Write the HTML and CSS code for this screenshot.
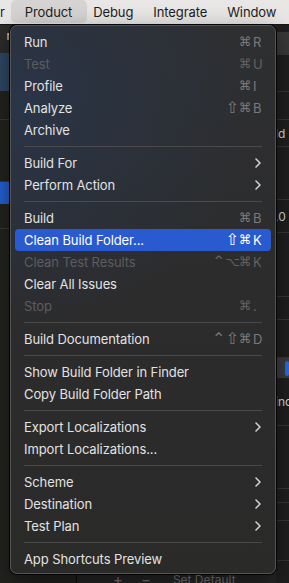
FILE: index.html
```html
<!DOCTYPE html>
<html lang="en">
<head>
    <meta charset="UTF-8">
    <title>Product menu</title>
    <link rel="stylesheet" href="styles.css">
</head>
<body>
    <div class="menubar">
        <span class="mb-item mb-cut">r</span>
        <span class="mb-item active">Product</span>
        <span class="mb-item">Debug</span>
        <span class="mb-item">Integrate</span>
        <span class="mb-item">Window</span>
    </div>

    <!-- window content behind the menu -->
    <div class="window">
        <div class="sidebar">
            <div class="sb-row sb-top"><span>n-</span></div>
            <div class="sb-row sb-sel"></div>
            <div class="sb-row sb-s"><span>s</span></div>
            <div class="sb-row sb-gap"></div>
            <div class="sb-row sb-active"><span>io</span></div>
            <div class="sb-row sb-gap2"></div>
            <div class="sb-row sb-io"><span>io</span></div>
        </div>
        <div class="editor">
            <div class="editor-body"></div>
            <div class="editor-bar">
                <span class="bar-btn">+</span>
                <span class="bar-btn">−</span>
                <span class="bar-label">Set Default</span>
            </div>
        </div>
        <div class="inspector">
            <div class="in-row in-tab"></div>
            <div class="in-row h37"></div>
            <div class="in-row h28"></div>
            <div class="in-row h27"><span>ld :</span></div>
            <div class="in-row h53"></div>
            <div class="in-row h33"><span>.0</span></div>
            <div class="in-row h64"></div>
            <div class="in-row h23"></div>
            <div class="in-row h38"></div>
            <div class="in-row in-bar"><i class="in-toggle"></i></div>
            <div class="in-row h48"><span>inc</span></div>
            <div class="in-row h63"></div>
            <div class="in-row h14"></div>
            <div class="in-row h18"></div>
            <div class="in-row h40"></div>
        </div>
    </div>

    <!-- Product menu -->
    <div class="menu">
        <div class="item"><span class="label">Run</span><span class="keys"><span class="mod">⌘</span><span class="key">R</span></span></div>
        <div class="item disabled"><span class="label">Test</span><span class="keys"><span class="mod">⌘</span><span class="key">U</span></span></div>
        <div class="item"><span class="label">Profile</span><span class="keys"><span class="mod">⌘</span><span class="key">I</span></span></div>
        <div class="item"><span class="label">Analyze</span><span class="keys"><span class="mod big">⇧</span><span class="mod">⌘</span><span class="key">B</span></span></div>
        <div class="item"><span class="label">Archive</span></div>
        <div class="sep"></div>
        <div class="item"><span class="label">Build For</span><svg class="chev" viewBox="0 0 6 10"><polyline points="1,1 5,5 1,9"/></svg></div>
        <div class="item"><span class="label">Perform Action</span><svg class="chev" viewBox="0 0 6 10"><polyline points="1,1 5,5 1,9"/></svg></div>
        <div class="sep"></div>
        <div class="item"><span class="label">Build</span><span class="keys"><span class="mod">⌘</span><span class="key">B</span></span></div>
        <div class="item selected"><span class="label">Clean Build Folder...</span><span class="keys"><span class="mod big">⇧</span><span class="mod">⌘</span><span class="key">K</span></span></div>
        <div class="item disabled"><span class="label">Clean Test Results</span><span class="keys"><span class="mod big">⌃</span><span class="mod">⌥</span><span class="mod">⌘</span><span class="key">K</span></span></div>
        <div class="item"><span class="label">Clear All Issues</span></div>
        <div class="item disabled"><span class="label">Stop</span><span class="keys"><span class="mod">⌘</span><span class="key">.</span></span></div>
        <div class="sep"></div>
        <div class="item"><span class="label">Build Documentation</span><span class="keys"><span class="mod big">⌃</span><span class="mod big">⇧</span><span class="mod">⌘</span><span class="key">D</span></span></div>
        <div class="sep"></div>
        <div class="item"><span class="label">Show Build Folder in Finder</span></div>
        <div class="item"><span class="label">Copy Build Folder Path</span></div>
        <div class="sep"></div>
        <div class="item"><span class="label">Export Localizations</span><svg class="chev" viewBox="0 0 6 10"><polyline points="1,1 5,5 1,9"/></svg></div>
        <div class="item"><span class="label">Import Localizations...</span></div>
        <div class="sep"></div>
        <div class="item"><span class="label">Scheme</span><svg class="chev" viewBox="0 0 6 10"><polyline points="1,1 5,5 1,9"/></svg></div>
        <div class="item"><span class="label">Destination</span><svg class="chev" viewBox="0 0 6 10"><polyline points="1,1 5,5 1,9"/></svg></div>
        <div class="item"><span class="label">Test Plan</span><svg class="chev" viewBox="0 0 6 10"><polyline points="1,1 5,5 1,9"/></svg></div>
        <div class="sep"></div>
        <div class="item"><span class="label">App Shortcuts Preview</span></div>
    </div>
</body>
</html>
```

FILE: styles.css
```css
* {
    box-sizing: border-box;
}
body {
    margin: 0;
    width: 289px;
    height: 583px;
    overflow: hidden;
    position: relative;
    background: #222220;
    font-family: Inter, 'Noto Sans', sans-serif;
}
/* top menu bar */
.menubar {
    height: 25px;
    padding-bottom: 1px;
    background: #e9e7e5;
    border-bottom: 1px solid #161616;
    display: flex;
    align-items: center;
    gap: 20px;
    font-size: 13px;
    letter-spacing: -0.1px;
    color: #1c1c1c;
}
.mb-item {
    white-space: nowrap;
}
.mb-cut {
    margin-left: 0;
}
.mb-item.active {
    align-self: stretch;
    display: flex;
    align-items: center;
    padding: 0 15px 0 14px;
    margin: 0 -14px 0 -14px;
    background: #d6d4d2;
    border-radius: 5px;
}
/* window behind */
.window {
    display: flex;
    height: 558px;
    overflow: hidden;
    font-size: 12px;
    color: #dcdcdc;
}
.sidebar {
    width: 77px;
    background: #232320;
    border-right: 1px solid #0c0c0c;
    display: flex;
    flex-direction: column;
}
.sb-row {
    display: flex;
    align-items: center;
    justify-content: flex-end;
    padding-right: 67px;
    white-space: nowrap;
}
.sb-row span {
    margin-right: -10px;
}
.sb-top {
    height: 28px;
    background: #2c2c2c;
    align-items: flex-start;
    padding-top: 3px;
}
.sb-sel {
    height: 38px;
    background: #2f4866;
}
.sb-s {
    height: 29px;
    border-bottom: 1px solid #3a3a38;
}
.sb-gap {
    height: 62px;
    border-bottom: 1px solid #3a3a38;
}
.sb-active {
    height: 22px;
    background: #2461d6;
    color: #fff;
}
.sb-gap2 {
    height: 25px;
    border-bottom: 1px solid #3a3a38;
}
.sb-io {
    height: 48px;
}
.editor {
    flex: 1;
    display: flex;
    flex-direction: column;
    background: #262626;
}
.editor-body {
    height: 548px;
    border-bottom: 1px solid #3b3b3b;
    flex-shrink: 0;
}
.editor-bar {
    height: 14px;
    display: flex;
    align-items: flex-end;
    color: #777;
    font-size: 12px;
    padding-left: 36px;
    gap: 18px;
}
.bar-btn {
    font-size: 15px;
    line-height: 14px;
}
.bar-label {
    margin-left: 4px;
}
.inspector {
    width: 13px;
    background: #1f1f1f;
    display: flex;
    flex-direction: column;
    overflow: hidden;
}
.in-row {
    flex-shrink: 0;
    border-bottom: 1px solid #363636;
    display: flex;
    align-items: center;
    white-space: nowrap;
    color: #d8d8d8;
}
.in-row span {
    margin-left: -1px;
}
.in-tab {
    height: 30px;
    background: #393939;
    border-top: 7px solid #1f1f1f;
    border-bottom: none;
}
.in-bar {
    height: 20px;
    background: #3c3c3c;
    border-bottom: none;
}
.in-toggle {
    width: 6px;
    height: 15px;
    margin-left: 9px;
    background: #2a6de0;
    border-radius: 3px;
}
.h14 { height: 14px; }
.h18 { height: 18px; }
.h23 { height: 23px; }
.h27 { height: 27px; }
.h28 { height: 28px; }
.h33 { height: 33px; }
.h37 { height: 37px; }
.h38 { height: 38px; }
.h40 { height: 40px; }
.h48 { height: 48px; }
.h53 { height: 53px; }
.h63 { height: 63px; }
.h64 { height: 64px; }
/* product menu */
.menu {
    position: absolute;
    top: 25px;
    left: 10px;
    width: 266px;
    padding: 5px 0 3px;
    border: 1px solid #545454;
    border-radius: 7px;
    background:
        radial-gradient(ellipse 90% 40% at 0% 15%, rgba(38, 58, 92, 0.55), transparent),
        linear-gradient(180deg, #2e2f31 0%, #2c2c2d 50%, #2a2a29 100%);
    box-shadow: 0 0 0 1px #050505, 0 8px 24px rgba(0, 0, 0, 0.5);
    font-size: 13px;
    letter-spacing: -0.1px;
    color: #e2e2e2;
}
.item {
    height: 22px;
    margin: 0 4px;
    padding: 0 8px 0 9px;
    border-radius: 4px;
    display: flex;
    align-items: center;
    white-space: nowrap;
}
.label {
    flex: 1;
}
.item.disabled .label {
    color: #5d5d5d;
}
.item.selected {
    background: #2a5ad0;
    color: #fff;
}
.keys {
    display: flex;
    align-items: center;
    height: 22px;
    color: #7a7a7a;
}
.item.disabled .keys {
    color: #626262;
}
.item.selected .keys {
    color: #fff;
}
.mod {
    width: 11px;
    margin-left: 2.5px;
    text-align: center;
    font-family: 'DejaVu Sans', sans-serif;
    font-size: 12.5px;
    line-height: 22px;
}
.mod.big {
    font-size: 16px;
}
.key {
    width: 10px;
    margin-left: 3px;
}
.chev {
    width: 6px;
    height: 10px;
    margin-right: 2px;
    fill: none;
    stroke: #d6d6d6;
    stroke-width: 1.5;
    stroke-linecap: round;
    stroke-linejoin: round;
}
.sep {
    height: 1px;
    margin: 5px 13px;
    background: #4a4a4a;
}
```
